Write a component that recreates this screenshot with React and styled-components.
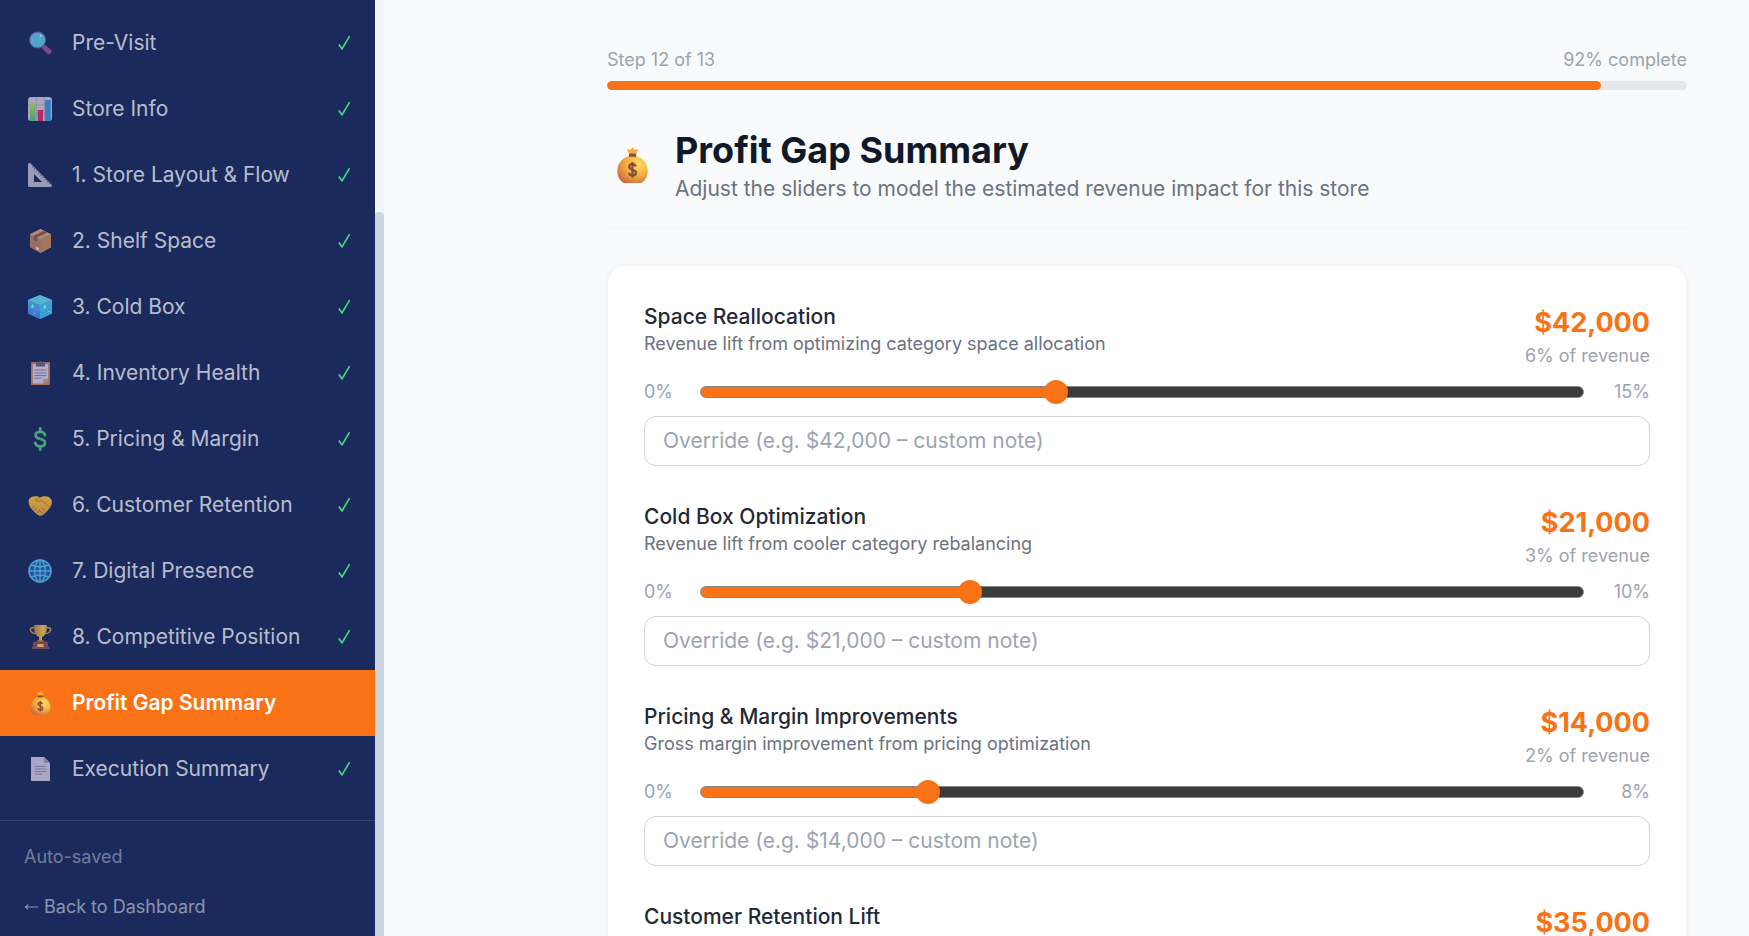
import React, { useState } from "react";
import styled, { createGlobalStyle } from "styled-components";

const steps = [
	{ label: "Pre-Visit", icon: "search", done: true },
	{ label: "Store Info", icon: "chart", done: true },
	{ label: "1. Store Layout & Flow", icon: "ruler", done: true },
	{ label: "2. Shelf Space", icon: "box", done: true },
	{ label: "3. Cold Box", icon: "ice", done: true },
	{ label: "4. Inventory Health", icon: "clipboard", done: true },
	{ label: "5. Pricing & Margin", icon: "dollar", done: true },
	{ label: "6. Customer Retention", icon: "handshake", done: true },
	{ label: "7. Digital Presence", icon: "globe", done: true },
	{ label: "8. Competitive Position", icon: "trophy", done: true },
	{ label: "Profit Gap Summary", icon: "bag", active: true },
	{ label: "Execution Summary", icon: "page", done: true },
];

const gaps = [
	{
		id: "space",
		title: "Space Reallocation",
		note: "Revenue lift from optimizing category space allocation",
		percent: 6,
		max: 15,
	},
	{
		id: "coldbox",
		title: "Cold Box Optimization",
		note: "Revenue lift from cooler category rebalancing",
		percent: 3,
		max: 10,
	},
	{
		id: "pricing",
		title: "Pricing & Margin Improvements",
		note: "Gross margin improvement from pricing optimization",
		percent: 2,
		max: 8,
	},
	{
		id: "retention",
		title: "Customer Retention Lift",
		note: "Revenue lift from repeat customers",
		percent: 5,
		max: 10,
	},
];

const REVENUE = 700000;

const money = (percent) =>
	"$" + Math.round((REVENUE * percent) / 100).toLocaleString("en-US");

const icons = {
	search: (
		<>
			<path d="M16.4 16.2l4.6 4.4" stroke="#7a4a8c" strokeWidth="5" strokeLinecap="round" />
			<path d="M14 14l2 2" stroke="#5c5c8a" strokeWidth="2" />
			<circle cx="9.6" cy="9" r="8" fill="#4fa5c8" stroke="#6a4d8b" strokeWidth="1" />
			<circle cx="12.8" cy="4.8" r="1.1" fill="#a5d3e4" />
		</>
	),
	chart: (
		<>
			<rect width="24" height="24" rx="3" fill="#a9a7bf" />
			<path d="M0 8h24M0 16h24M8.3 0v24M16.3 0v24" stroke="#8a88a6" strokeWidth="0.8" />
			<rect x="2" y="6" width="5.4" height="18" fill="url(#barGreen)" />
			<rect x="9.7" y="13" width="5.3" height="11" fill="#b52a6e" />
			<rect x="17" y="3" width="5.8" height="21" fill="#3580c2" />
		</>
	),
	ruler: (
		<>
			<path
				fillRule="evenodd"
				d="M0 1.6C0 .2 1.6-.4 2.6.6L23.4 21.4c1 1 .4 2.6-1 2.6H1.2C.5 24 0 23.5 0 22.8zM6 11v8h8z"
				fill="#9b9bb6"
			/>
			<path d="M4 3.4L22 21.4" stroke="#6f5fa8" strokeWidth="1.3" strokeDasharray="1.4 1.6" />
		</>
	),
	box: (
		<>
			<path d="M12.5 0L23 5.2v13L12.5 24 2 18.2v-13z" fill="#99705f" />
			<path d="M12.5 0L23 5.2 12.5 10.6 2 5.2z" fill="#b08b76" />
			<path d="M12.5 10.6L23 5.2v13L12.5 24z" fill="#a3765d" />
			<path d="M16 1.8L5.6 7v4.2l3.2 1.6V8.6L19.4 3.4z" fill="#6f5053" />
			<path d="M8 17.6l3 1.4v2.6l-3-1.4z" fill="#c7b3bd" />
		</>
	),
	ice: (
		<>
			<path d="M12 0l12 5v13.4L12 24 0 18.4V5z" fill="#3f8fd4" />
			<path d="M12 0l12 5-12 5L0 5z" fill="#58b3cd" />
			<path d="M12 10l12-5v13.4L12 24z" fill="#3ba2d6" />
			<path d="M0 5l12 5v14L0 18.4z" fill="url(#iceLeft)" />
			<path d="M4.4 9c2 3 1.4 4 0 4s-1.8-1 0-4zM16.8 9.4c2 3 1.4 4.2 0 4.2s-2-1.2 0-4.2z" fill="#8fc6e6" />
			<circle cx="6.6" cy="18.4" r="0.9" fill="#74a8e4" />
			<circle cx="10" cy="14.6" r="0.7" fill="#74a8e4" />
			<circle cx="21" cy="16.4" r="0.7" fill="#8fd0e6" />
		</>
	),
	clipboard: (
		<>
			<rect x="3" y="1" width="19" height="23" rx="1" fill="#a1705f" />
			<path d="M4.8 3h15.4v14.5L15 22.5H4.8z" fill="#b3aecb" />
			<path d="M20.2 17.5V22.5H15z" fill="#b87b58" />
			<path d="M15 17.8h5l-5 4.7z" fill="#918bb0" />
			<path d="M8 3V1.6h2.4C10.6.4 11.4 0 12.4 0s1.9.4 2.1 1.6H17V5.6H8z" fill="#5b5673" />
			<path d="M6.6 9h12M6.6 12h12M6.6 14.6h12M6.6 17.2h6.6" stroke="#706c94" strokeWidth="1" />
		</>
	),
	dollar: (
		<path
			d="M17 8.2C16.6 6 14.8 4.8 12.2 4.8 9.4 4.8 7.6 6 7.6 8.2c0 2.4 2 3 4.6 3.6 2.8.7 4.8 1.4 4.8 4 0 2.4-2 3.6-4.8 3.6-2.8 0-4.6-1.2-5-3.6M12.2 1.4v3M12.2 19.6v3"
			stroke="#46a183"
			strokeWidth="2.8"
			strokeLinecap="round"
		/>
	),
	handshake: (
		<>
			<path
				d="M1 6.6C2 4.400 4.600 3.200 7.400 3.200c1.800 0 3.200.4 4.800 1.200 1.600-.8 3-1.200 4.800-1.200 2.800 0 5.400 1.200 6.400 3.400 1 2.800.2 5.600-1.400 7.800-1.800 2.800-4.600 5.800-7.600 7.800-1.400.8-2.800.8-4 0-3.200-1.800-6-5-8-8C.8 11.600.2 9 1 6.600z"
				fill="url(#hand)"
			/>
			<path
				d="M11.600 4.800L7.600 7.200c.4 1.800 3 1.600 4.600.4l1.800-.4 7.200 6.800M13.400 14.400l3.800 3.400M11 17.200l3.200 2.800M4.400 15.200l1.800-2.400M6.400 17.600l2.400-3M9 20l2.200-3"
				stroke="#96693f"
				strokeWidth="0.9"
				strokeLinecap="round"
			/>
		</>
	),
	globe: (
		<>
			<circle cx="12" cy="12" r="11" fill="#24539a" />
			<g stroke="#4ea0d2" strokeWidth="1.5">
				<circle cx="12" cy="12" r="11" />
				<ellipse cx="12" cy="12" rx="5.4" ry="11" />
				<path d="M12 1v22M1 12h22M3.4 6c5 2.200 12.200 2.200 17.200 0M3.400 18c5-2.200 12.200-2.200 17.200 0" />
			</g>
		</>
	),
	trophy: (
		<>
			<path
				d="M6.600 2.800H4.400c-1.800 0-2.200 1.200-1.800 2.600.6 2.200 2.400 3 4.800 3.200M18.400 2.800h2.200c1.800 0 2.200 1.200 1.800 2.600-.6 2.200-2.400 3-4.800 3.200"
				stroke="#ab8650"
				strokeWidth="1.5"
			/>
			<path d="M6.200 0h12.600c.4 6-.8 10.400-4.800 12v3.400h-3V12C7 10.400 5.800 6 6.200 0z" fill="url(#cup)" />
			<path d="M9.600 15h5.800v2H9.600z" fill="#b1743c" />
			<path d="M6.200 16.600h12.600c1 0 1.200 1 1.200 2v3h1.200V24H3.800v-2.400H5v-3c0-1 .2-2 1.200-2z" fill="#704861" />
			<rect x="9.400" y="19" width="6.200" height="3" fill="#cbab64" />
		</>
	),
	bag: (
		<>
			<path d="M8.600 1.500l2.400.3L12.400.1l1.400 1.700 2.400-.3-1.500 3.100h-4.600z" fill="#f6ad36" />
			<path
				d="M10 6h4.800c4.600 1.200 7.700 5.600 7.700 10 0 3.800-1.900 7-4.500 8H6.800c-2.600-1-4.600-4.200-4.600-8 0-4.400 3.200-8.800 7.800-10z"
				fill="url(#bagBody)"
			/>
			<path d="M10 4.400h4.800v2.100H10z" fill="#80513f" />
			<path
				d="M14.500 13c-.3-1.100-1-1.600-2.200-1.600-1.300 0-2.200.6-2.200 1.700 0 2.600 4.600 1.500 4.600 4.100 0 1.200-1 1.800-2.400 1.800-1.200 0-2-.6-2.400-1.700M12.300 10v10.400"
				stroke="#84503c"
				strokeWidth="1.500"
			/>
		</>
	),
	page: (
		<>
			<path d="M3.600 0H16l6 6v18H3.600c-.4 0-.6-.2-.6-.6V.6c0-.4.2-.6.6-.6z" fill="#aaa7c6" />
			<path d="M16 0l6 6h-5.400c-.4 0-.6-.2-.6-.6z" fill="#8581a6" />
			<path d="M6.600 9.400h11.800M6.600 12h11.800M6.600 14.600h11.800M6.600 17.200h7.400" stroke="#7a7799" strokeWidth="1" />
		</>
	),
};

// gradients shared by every emoji on the page
function IconDefs() {
	return (
		<HiddenSvg aria-hidden="true">
			<defs>
				<linearGradient id="barGreen" x1="0" y1="0" x2="0" y2="1">
					<stop offset="0" stopColor="#92ba55" />
					<stop offset="1" stopColor="#45a37c" />
				</linearGradient>
				<linearGradient id="iceLeft" x1="0" y1="0" x2="0" y2="1">
					<stop offset="0" stopColor="#4a9bd0" />
					<stop offset="1" stopColor="#3a6fd0" />
				</linearGradient>
				<linearGradient id="hand" x1="0" y1="0" x2="0" y2="1">
					<stop offset="0" stopColor="#d2a13e" />
					<stop offset="1" stopColor="#b98a48" />
				</linearGradient>
				<linearGradient id="cup" x1="0" y1="0" x2="1" y2="0">
					<stop offset="0" stopColor="#b06c42" />
					<stop offset="0.7" stopColor="#c3aa5c" />
					<stop offset="1" stopColor="#a98a4e" />
				</linearGradient>
				<radialGradient id="bagBody" cx="0.7" cy="0.3" r="0.85">
					<stop offset="0" stopColor="#fddc58" />
					<stop offset="0.5" stopColor="#f4ae42" />
					<stop offset="1" stopColor="#c9633a" />
				</radialGradient>
			</defs>
		</HiddenSvg>
	);
}

function Emoji({ name, size }) {
	return (
		<svg width={size} height={size} viewBox="0 0 24 24" fill="none" aria-hidden="true">
			{icons[name]}
		</svg>
	);
}

function Sidebar() {
	return (
		<SidebarWrapper>
			<SidebarPanel>
				<StepList>
					{steps.map((step) => (
						<li key={step.label}>
							<StepButton
								type="button"
								$active={step.active}
								aria-current={step.active ? "step" : undefined}
							>
								<StepIcon>
									<Emoji name={step.icon} size={24} />
								</StepIcon>
								<StepLabel>{step.label}</StepLabel>
								{step.done && (
									<svg width="14" height="16" viewBox="0 0 14 16" fill="none" aria-label="Done">
										<path d="M1.8 9.600l3.200 4.200L12.600 1.200" stroke="#4ade80" strokeWidth="1.600" />
									</svg>
								)}
							</StepButton>
						</li>
					))}
				</StepList>
				<SidebarFooter>
					<SaveState>Auto-saved</SaveState>
					<BackLink href="#">
						<svg width="15" height="10" viewBox="0 0 15 10" fill="none" aria-hidden="true">
							<path d="M1.500 5H14M4.200 2.600L1.500 5l2.700 2.400" stroke="currentColor" strokeWidth="1.200" />
						</svg>
						Back to Dashboard
					</BackLink>
				</SidebarFooter>
			</SidebarPanel>
			<ScrollTrack>
				<ScrollThumb />
			</ScrollTrack>
		</SidebarWrapper>
	);
}

function GapRow({ gap }) {
	const [percent, setPercent] = useState(gap.percent);
	const [override, setOverride] = useState("");
	const ratio = percent / gap.max;

	return (
		<GapItem>
			<GapHead>
				<div>
					<GapTitle htmlFor={gap.id}>{gap.title}</GapTitle>
					<GapNote>{gap.note}</GapNote>
				</div>
				<GapResult>
					<Amount>{money(percent)}</Amount>
					<Muted>{percent}% of revenue</Muted>
				</GapResult>
			</GapHead>
			<SliderRow>
				<Muted>0%</Muted>
				<Slider
					id={gap.id}
					type="range"
					min="0"
					max={gap.max}
					value={percent}
					onChange={(e) => setPercent(Number(e.target.value))}
					style={{ "--fill": `${ratio * 100}%` }}
				/>
				<Muted>{gap.max}%</Muted>
			</SliderRow>
			<OverrideInput
				type="text"
				aria-label={`${gap.title} override`}
				placeholder={`Override (e.g. ${money(percent)} – custom note)`}
				value={override}
				onChange={(e) => setOverride(e.target.value)}
			/>
		</GapItem>
	);
}

export default function App() {
	return (
		<>
			<GlobalStyle />
			<IconDefs />
			<Shell>
				<Sidebar />
				<Main>
					<Content>
						<ProgressLabels>
							<Muted>Step 12 of 13</Muted>
							<Muted>92% complete</Muted>
						</ProgressLabels>
						<ProgressTrack>
							<ProgressFill style={{ width: "92%" }} />
						</ProgressTrack>
						<PageHead>
							<PageIcon>
								<Emoji name="bag" size={36} />
							</PageIcon>
							<div>
								<PageTitle>Profit Gap Summary</PageTitle>
								<PageNote>
									Adjust the sliders to model the estimated revenue impact for this store
								</PageNote>
							</div>
						</PageHead>
						<Card>
							{gaps.map((gap) => (
								<GapRow key={gap.id} gap={gap} />
							))}
						</Card>
					</Content>
				</Main>
			</Shell>
		</>
	);
}

const GlobalStyle = createGlobalStyle`
	* {
		box-sizing: border-box;
	}
	body {
		margin: 0;
		background: #f8fafc;
		color: #111827;
		font-family: Inter, "Liberation Sans", sans-serif;
		font-size: 21px;
		line-height: 30px;
	}
	h1, p, ul {
		margin: 0;
		padding: 0;
	}
`;

const HiddenSvg = styled.svg`
	position: absolute;
	width: 0;
	height: 0;
`;

const Shell = styled.div`
	display: flex;
	height: 100vh;
	overflow: hidden;
`;

const SidebarWrapper = styled.aside`
	display: flex;
	flex: none;
	width: 384px;
`;

const SidebarPanel = styled.div`
	display: flex;
	flex: 1;
	flex-direction: column;
	padding-top: 10px;
	background: #1b2a5c;
	color: rgba(255, 255, 255, 0.7);
`;

const ScrollTrack = styled.div`
	flex: none;
	width: 9px;
	padding-top: 212px;
	background: #f1f5f9;
`;

const ScrollThumb = styled.div`
	height: 100%;
	border-radius: 4px 4px 0 0;
	background: #cbd5e1;
`;

const StepList = styled.ul`
	padding-bottom: 18px;
	list-style: none;
`;

const StepButton = styled.button`
	display: flex;
	align-items: center;
	gap: 16px;
	width: 100%;
	padding: 18px 24px;
	border: none;
	background: ${(props) => (props.$active ? "#f97316" : "transparent")};
	color: ${(props) => (props.$active ? "#ffffff" : "inherit")};
	font: inherit;
	font-weight: ${(props) => (props.$active ? 600 : 400)};
	text-align: left;
	cursor: pointer;
`;

const StepIcon = styled.span`
	display: flex;
	justify-content: center;
	width: 32px;
`;

const StepLabel = styled.span`
	flex: 1;
	white-space: nowrap;
`;

const SidebarFooter = styled.div`
	display: flex;
	flex: 1;
	flex-direction: column;
	gap: 26px;
	padding: 24px;
	border-top: 1px solid rgba(255, 255, 255, 0.12);
	font-size: 18px;
	line-height: 24px;
`;

const SaveState = styled.p`
	color: rgba(255, 255, 255, 0.4);
`;

const BackLink = styled.a`
	display: flex;
	align-items: center;
	gap: 5px;
	color: rgba(255, 255, 255, 0.5);
	text-decoration: none;
`;

const Main = styled.main`
	flex: 1;
	min-width: 0;
	padding: 48px 62px;
	overflow-y: auto;
	scrollbar-width: none;
`;

const Content = styled.div`
	max-width: 1080px;
	margin-left: auto;
`;

const Muted = styled.span`
	color: #9ca3af;
	font-size: 18px;
	line-height: 24px;
`;

const ProgressLabels = styled.div`
	display: flex;
	justify-content: space-between;
	margin-bottom: 9px;
`;

const ProgressTrack = styled.div`
	height: 9px;
	border-radius: 9px;
	background: #e5e7eb;
	overflow: hidden;
`;

const ProgressFill = styled.div`
	height: 100%;
	border-radius: 9px;
	background: #f97316;
`;

const PageHead = styled.header`
	display: flex;
	align-items: center;
	gap: 18px;
	margin: 36px 0;
	padding-bottom: 24px;
	border-bottom: 1px solid #f3f4f6;
`;

const PageIcon = styled.span`
	display: flex;
	justify-content: center;
	width: 50px;
`;

const PageTitle = styled.h1`
	color: #111827;
	font-size: 36px;
	font-weight: 700;
	line-height: 48px;
`;

const PageNote = styled.p`
	color: #6b7280;
`;

const Card = styled.section`
	display: flex;
	flex-direction: column;
	gap: 36px;
	padding: 36px;
	border: 1px solid #f3f4f6;
	border-radius: 18px;
	background: #ffffff;
	box-shadow: 0 1px 4px rgba(0, 0, 0, 0.05);
`;

const GapItem = styled.div`
	display: flex;
	flex-direction: column;
	gap: 12px;
`;

const GapHead = styled.div`
	display: flex;
	justify-content: space-between;
`;

const GapTitle = styled.label`
	display: block;
	color: #1f2937;
	font-weight: 500;
`;

const GapNote = styled.p`
	color: #6b7280;
	font-size: 18px;
	line-height: 24px;
`;

const GapResult = styled.div`
	display: flex;
	flex-direction: column;
	align-items: flex-end;
`;

const Amount = styled.strong`
	color: #f97316;
	font-size: 27px;
	font-weight: 700;
	line-height: 42px;
`;

const SliderRow = styled.div`
	display: grid;
	grid-template-columns: 38px 1fr 48px;
	align-items: center;
	column-gap: 18px;

	${Muted}:last-child {
		text-align: right;
	}
`;

const Slider = styled.input`
	appearance: none;
	width: 100%;
	height: 24px;
	margin: 0;
	background: transparent;
	cursor: pointer;

	&::-webkit-slider-runnable-track {
		height: 12px;
		border: 1px solid #858585;
		border-radius: 6px;
		background: linear-gradient(to right, #f97316 var(--fill), #3b3b3b var(--fill));
	}

	&::-webkit-slider-thumb {
		appearance: none;
		width: 24px;
		height: 24px;
		margin-top: -7px;
		border-radius: 50%;
		background: #f97316;
	}
`;

const OverrideInput = styled.input`
	width: 100%;
	padding: 9px 18px;
	border: 1px solid #d1d5db;
	border-radius: 12px;
	background: #ffffff;
	color: #111827;
	font: inherit;

	&::placeholder {
		color: #9ca3af;
		opacity: 1;
	}
`;
